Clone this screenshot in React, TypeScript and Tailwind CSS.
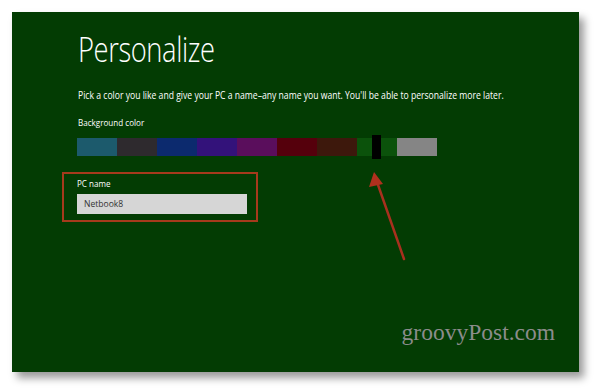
import React from "react";

const swatches = [
  "bg-[#1c5a6c]",
  "bg-[#2e2a2e]",
  "bg-[#0c2a6e]",
  "bg-[#33127a]",
  "bg-[#5a0e5c]",
  "bg-[#55000c]",
  "bg-[#3d180c]",
];

export default function App() {
  return (
    <div className="w-[600px] h-[391px] bg-white pt-[12px] pl-[12px] overflow-hidden">
      <div
        className="relative w-[567px] h-[360px] bg-[#033c03] shadow-[5px_6px_8px_rgba(0,0,0,0.4)] flex flex-col pl-[66px] text-white"
        style={{ fontFamily: '"Open Sans", "Noto Sans", sans-serif' }}
      >
        <h1 className="mt-[17px] h-[40px] text-[35px] leading-[40px] font-light tracking-[-0.5px] origin-left scale-x-[0.78] whitespace-nowrap">
          Personalize
        </h1>
        <p className="mt-[19px] h-[14px] text-[10.5px] leading-[14px] origin-left scale-x-[0.82] whitespace-nowrap">
          Pick a color you like and give your PC a name–any name you want. You'll be able to personalize more later.
        </p>
        <p className="mt-[14px] h-[13px] text-[9.5px] leading-[13px] origin-left scale-x-[0.85] whitespace-nowrap">
          Background color
        </p>
        <div className="mt-[6px] -ml-[1px] flex items-center h-[24px]">
          {swatches.map((c, i) => (
            <div key={i} className={`w-[40px] h-[18px] ${c}`} />
          ))}
          <div className="w-[40px] h-[18px] bg-[#0b520b] flex pl-[15px]">
            <div className="w-[9px] h-[24px] -mt-[3px] bg-black" />
          </div>
          <div className="w-[40px] h-[18px] bg-[#858585]" />
        </div>
        <div className="mt-[13px] -ml-[16px] w-[196px] h-[50px] border-2 border-[#a63a1c] pl-[13px] pr-[9px] flex flex-col">
          <p className="mt-[3px] h-[14px] text-[9.5px] leading-[14px] origin-left scale-x-[0.85] whitespace-nowrap">
            PC name
          </p>
          <div className="mt-[3px] w-[170px] h-[20px] bg-[#d6d6d6] pl-[7px] flex items-center">
            <span className="text-[9.5px] text-[#333] origin-left scale-x-[0.9] whitespace-nowrap">
              Netbook8
            </span>
          </div>
        </div>
        <div className="mt-auto mb-[26px] self-end pr-[24px]">
          <span
            className="text-[23.5px] leading-[28px] text-[#8c8c8c] whitespace-nowrap"
            style={{ fontFamily: '"Liberation Serif", "DejaVu Serif", serif' }}
          >
            groovyPost.com
          </span>
        </div>
        <svg
          className="absolute left-0 top-0 pointer-events-none"
          width="567"
          height="360"
          viewBox="0 0 567 360"
        >
          <line x1="392" y1="247" x2="365" y2="170" stroke="#a8301e" strokeWidth="2.5" strokeLinecap="round" />
          <polygon points="362,160 357,175 371,172" fill="#b0301e" />
        </svg>
      </div>
    </div>
  );
}
